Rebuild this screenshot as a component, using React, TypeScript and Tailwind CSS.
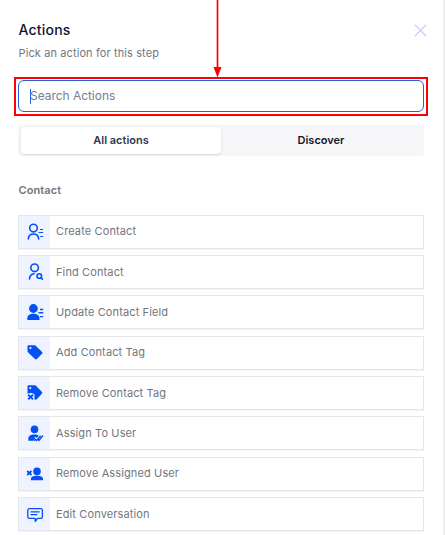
import React from "react";

const BLUE = "#0450f2";
const CELL = "#eff3ff";

const icons: Record<string, React.ReactNode> = {
  create: (
    <g fill="none" stroke={BLUE} strokeWidth="1.6" strokeLinecap="round">
      <circle cx="14.5" cy="12.1" r="3.8" />
      <path d="M9.3 23c.2-3.3 2-5 5.2-5s5 1.7 5.2 5" />
      <path d="M21.6 13.5h1.9M20.2 16.5h3.3M21.8 20.5h1.7" strokeLinecap="square" strokeWidth="1.2" />
    </g>
  ),
  find: (
    <g fill="none" stroke={BLUE} strokeWidth="1.6" strokeLinecap="round">
      <circle cx="15.6" cy="11.8" r="3.8" />
      <path d="M10.5 23c.2-3.1 1.8-4.9 4.6-5.2" />
      <circle cx="20.3" cy="20" r="2.3" />
      <path d="M22.1 21.8l1.3 1.3" />
    </g>
  ),
  update: (
    <g fill={BLUE}>
      <circle cx="14.4" cy="12.5" r="4.4" />
      <path d="M8.3 24v-1.6c0-3.1 2.5-4.6 6.1-4.6s6.1 1.5 6.1 4.6V24z" />
      <path d="M21 12.8h3.2v1.4H21zM19.5 16.1h4.7v1.4h-4.7zM21 19.9h3.2v1.4H21z" />
    </g>
  ),
  tag: (
    <path
      fill={BLUE}
      fillRule="evenodd"
      d="M9.6 8.3h5.9c.5 0 .9.2 1.2.5l6.4 6.1c.6.6.6 1.3 0 1.9l-5.2 5.2c-.6.6-1.3.6-1.9 0l-6.8-6.6c-.5-.5-.7-.8-.7-1.4V9.6c0-.8.4-1.3 1.1-1.3zM11.4 9.9a1.1 1.1 0 100 2.2 1.1 1.1 0 000-2.2z"
    />
  ),
  untag: (
    <g>
      <path
        fill={BLUE}
        fillRule="evenodd"
        d="M9.6 8.3h6.3c.6 0 1 .2 1.3.7l5.8 6.1c.4.5.4 1 0 1.5l-4.9 5.4c-.5.6-1.3.8-2.6.6v-5c-1.7-1.6-4-2-7-.8V9.5c0-.8.4-1.2 1.1-1.2zM11.3 9.9a1.1 1.1 0 100 2.2 1.1 1.1 0 000-2.2z"
      />
      <path stroke={BLUE} strokeWidth="1.9" d="M9.2 17.8l4.8 4.6M14 17.8l-4.8 4.6" />
    </g>
  ),
  assign: (
    <g>
      <g fill={BLUE}>
        <circle cx="15.5" cy="12.4" r="3.8" />
        <path d="M9.3 23.8v-2.1c0-2.6 2.3-4.1 6.1-4.1 2 0 3.6.5 4.6 1.3l-2 4.9z" />
      </g>
      <path fill="none" stroke={CELL} strokeWidth="2.6" d="M15.4 20.6l2.3 2.2 4.1-4.4" />
      <g fill="none" stroke={BLUE} strokeWidth="1.4">
        <path d="M15 20.9l2.6 2.5 4-4.7" />
        <path d="M18.7 21.7l1.3 1.6 4-4.8" />
      </g>
    </g>
  ),
  unassign: (
    <g>
      <g fill={BLUE}>
        <circle cx="18" cy="13.4" r="3.8" />
        <path d="M11.9 22.2v-1.3c0-2 2.6-3.2 6.1-3.2s6.1 1.2 6.1 3.2v1.3z" />
      </g>
      <path stroke={BLUE} strokeWidth="1.8" d="M8.2 13l4.3 4M12.5 13l-4.3 4" />
    </g>
  ),
  chat: (
    <g fill="none" stroke={BLUE} strokeWidth="1.3" strokeLinecap="round" strokeLinejoin="round">
      <path d="M10.4 10.7h11.4c.9 0 1.6.7 1.6 1.6v6.5c0 .9-.7 1.6-1.6 1.6h-3.3l-2.3 3.1v-3.1h-5.8c-.9 0-1.6-.7-1.6-1.6v-6.5c0-.9.7-1.6 1.6-1.6z" />
      <path d="M12 13.8h8.2M12 16.6h5.8" />
    </g>
  ),
};

const rows = [
  { icon: "create", label: "Create Contact", gap: "mb-1.5", text: "pb-0.5" },
  { icon: "find", label: "Find Contact", gap: "mb-1.5", text: "" },
  { icon: "update", label: "Update Contact Field", gap: "mb-[7px]", text: "" },
  { icon: "tag", label: "Add Contact Tag", gap: "mb-1.5", text: "pb-0.5" },
  { icon: "untag", label: "Remove Contact Tag", gap: "mb-1.5", text: "" },
  { icon: "assign", label: "Assign To User", gap: "mb-[7px]", text: "" },
  { icon: "unassign", label: "Remove Assigned User", gap: "mb-1.5", text: "pb-0.5" },
  { icon: "chat", label: "Edit Conversation", gap: "", text: "" },
];

export default function App() {
  return (
    <div className="relative h-[535px] w-[445px] overflow-hidden border-r-2 border-[#efeff0] bg-white pl-[18px] pr-[19px] font-['Inter',sans-serif]">
      <header className="flex h-[77px] justify-between pt-[21px]">
        <div className="pl-[0.5px]">
          <h1 className="text-[14px] leading-[18px] font-medium tracking-[0.2px] text-[#101233]">Actions</h1>
          <p className="mt-[6px] text-[11px] leading-4 tracking-[0.11px] text-[#72767d]">Pick an action for this step</p>
        </div>
        <button aria-label="Close" className="mr-[-3px] mt-[3px] size-[13px]">
          <svg viewBox="0 0 13 13" className="block size-[13px]" stroke="#c9d4fa" strokeWidth="1.6" strokeLinecap="round">
            <path d="M1.3 1.3l10.4 10.4M11.7 1.3L1.3 11.7" />
          </svg>
        </button>
      </header>

      <div className="-mx-1 h-[39px] border-2 border-[#fb0007] px-0.5 py-px">
        <div className="flex h-8 items-center rounded-md border border-[#215fe0] pl-[11px]">
          <span className="h-[15px] w-px bg-[#215fe0]" />
          <span className="-ml-px text-[12px] tracking-[-0.04px] text-[#787d92]">Search Actions</span>
        </div>
      </div>

      <div className="mt-[9px] flex h-[31px] rounded-sm bg-[#f6f6f9] py-[2px] pl-[3px] text-[11px] font-semibold">
        <div className="flex w-[200px] items-center justify-center rounded-sm bg-white text-[#34374f] shadow-sm">All actions</div>
        <div className="flex w-[200px] items-center justify-center text-[#15172f]">Discover</div>
      </div>

      <h2 className="mt-[26px] h-[33px] pl-[0.5px] text-[11px] leading-4 font-semibold tracking-[0.1px] text-[#72767d]">Contact</h2>

      <div className="flex flex-col">
        {rows.map((r) => (
          <div
            key={r.icon}
            className={`flex h-[34px] items-center border border-[#e5e6ea] bg-white shadow-[0_1px_1px_rgba(0,0,0,0.04)] ${r.gap}`}
          >
            <svg width="31" height="32" viewBox="0 0 31 32" className="block shrink-0 bg-[#eff3ff]">
              {icons[r.icon]}
            </svg>
            <span className={`ml-1.5 text-[11px] tracking-[0.12px] text-[#72767d] ${r.text}`}>{r.label}</span>
          </div>
        ))}
      </div>

      <svg className="absolute left-[212px] top-0" width="11" height="78" viewBox="0 0 11 78">
        <path d="M5.5 0v70" stroke="#fb0007" strokeWidth="1.7" />
        <path d="M1.5 67h8l-4 10.5z" fill="#fb0007" />
      </svg>
    </div>
  );
}
